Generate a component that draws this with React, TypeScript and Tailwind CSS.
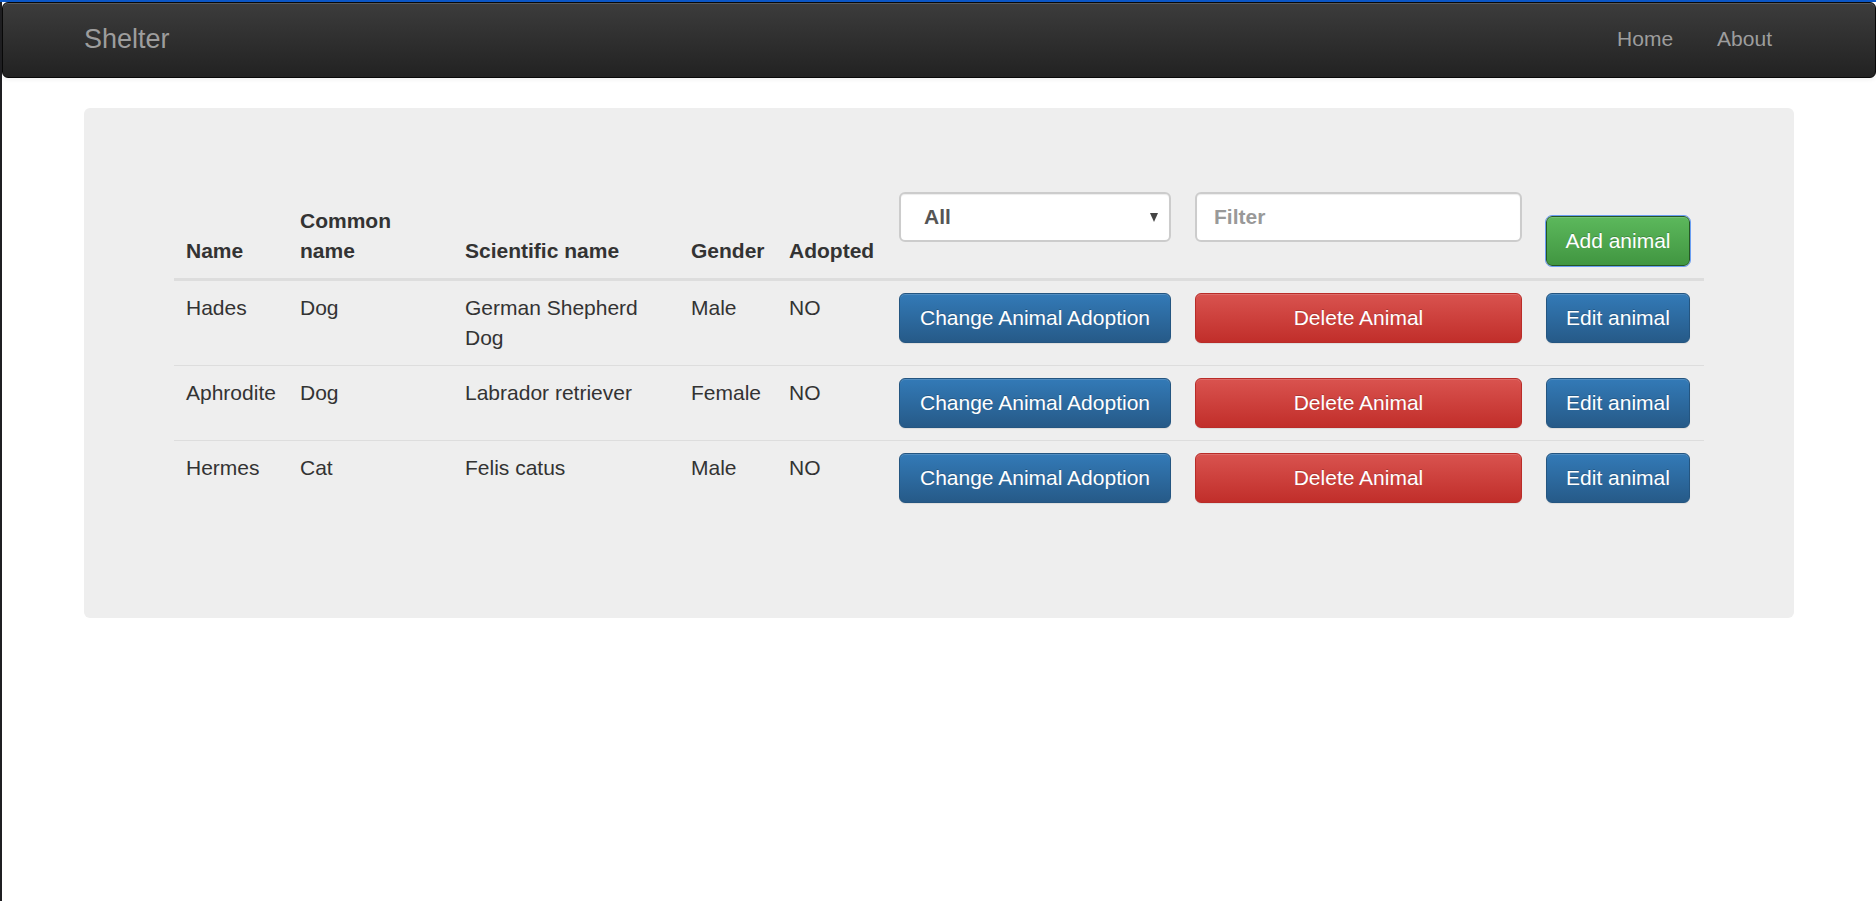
const cols = 'grid grid-cols-[114px_165px_226px_98px_110px_296px_351px_168px]'

const animals = [
  { name: 'Hades', common: 'Dog', scientific: 'German Shepherd Dog', gender: 'Male', adopted: 'NO' },
  { name: 'Aphrodite', common: 'Dog', scientific: 'Labrador retriever', gender: 'Female', adopted: 'NO' },
  { name: 'Hermes', common: 'Cat', scientific: 'Felis catus', gender: 'Male', adopted: 'NO' },
]

const btnBase =
  'h-[50px] rounded-[6px] border px-[18px] text-[21px] leading-[30px] text-white [text-shadow:0_-1px_0_rgba(0,0,0,0.2)] shadow-[inset_0_1px_0_rgba(255,255,255,0.15),0_1px_1px_rgba(0,0,0,0.075)]'
const btnPrimary = `${btnBase} border-[#245580] bg-[linear-gradient(to_bottom,#337ab7_0%,#265a88_100%)]`
const btnDanger = `${btnBase} border-[#b92c28] bg-[linear-gradient(to_bottom,#d9534f_0%,#c12e2a_100%)]`
const btnSuccess = `${btnBase} border-[#255625] bg-[linear-gradient(to_bottom,#5cb85c_0%,#419641_100%)] outline outline-1 outline-[#6a9ef3]`

function HeaderCell({ label, nowrap }: { label: string; nowrap?: boolean }) {
  return (
    <div className="flex h-[98px] items-end p-3 font-bold">
      <span className={nowrap ? 'whitespace-nowrap' : ''}>{label}</span>
    </div>
  )
}

export default function App() {
  return (
    <div className="min-h-screen bg-white font-['Liberation_Sans',Arial,sans-serif] text-[21px] leading-[30px] text-[#333]">
      {/* top accent line */}
      <div className="h-[2px] bg-[#0c58c9]" />

      <div className="min-h-[899px] border-l-2 border-[#1f1f22]">
        {/* Navbar */}
        <nav className="h-[76px] rounded-[6px] border border-[#080808] bg-[linear-gradient(to_bottom,#3c3c3c_0%,#222222_100%)] shadow-[inset_0_1px_0_rgba(255,255,255,0.15),0_1px_5px_rgba(0,0,0,0.075)]">
          <div className="mx-auto flex w-[1710px] justify-between pt-[21px]">
            <a className="text-[27px] leading-[30px] text-[#9d9d9d]">Shelter</a>
            <ul className="flex">
              <li className="px-[22px] text-[#9d9d9d]">Home</li>
              <li className="px-[22px] text-[#9d9d9d]">About</li>
            </ul>
          </div>
        </nav>

        {/* Jumbotron */}
        <div className="mx-auto mt-[30px] w-[1710px] rounded-[6px] bg-[#eeeeee] px-[90px] pt-[72px] pb-[103px]">
          {/* header row */}
          <div className={`${cols} border-b-[3px] border-[#dddddd]`}>
            <HeaderCell label="Name" nowrap />
            <HeaderCell label="Common name" />
            <HeaderCell label="Scientific name" nowrap />
            <HeaderCell label="Gender" nowrap />
            <HeaderCell label="Adopted" nowrap />
            <div className="h-[98px] p-3">
              <div className="flex h-[50px] items-center justify-between rounded-[6px] border-2 border-[#cccccc] bg-white pr-[11px] pl-[23px] shadow-[inset_0_1px_1px_rgba(0,0,0,0.075)]">
                <span className="font-bold text-[#555]">All</span>
                <svg width="8" height="9" viewBox="0 0 8 9">
                  <polygon points="0,0 8,0 4,9" fill="#444" />
                </svg>
              </div>
            </div>
            <div className="h-[98px] p-3">
              <input
                placeholder="Filter"
                className="h-[50px] w-full rounded-[6px] border-2 border-[#cccccc] bg-white px-[17px] text-[21px] text-[#555] shadow-[inset_0_1px_1px_rgba(0,0,0,0.075)] outline-none placeholder:font-bold placeholder:text-[#999]"
              />
            </div>
            <div className="flex h-[98px] items-end p-3">
              <button className={`${btnSuccess} w-full`}>Add animal</button>
            </div>
          </div>

          {/* rows */}
          {animals.map((a, idx) => (
            <div key={a.name} className={`${cols} ${idx > 0 ? 'border-t border-[#dddddd]' : ''}`}>
              <div className="p-3 whitespace-nowrap">{a.name}</div>
              <div className="p-3">{a.common}</div>
              <div className="p-3">{a.scientific}</div>
              <div className="p-3">{a.gender}</div>
              <div className="p-3">{a.adopted}</div>
              <div className="p-3">
                <button className={`${btnPrimary} w-full`}>Change Animal Adoption</button>
              </div>
              <div className="p-3">
                <button className={`${btnDanger} w-full`}>Delete Animal</button>
              </div>
              <div className="p-3">
                <button className={`${btnPrimary} w-full`}>Edit animal</button>
              </div>
            </div>
          ))}
        </div>
      </div>
    </div>
  )
}
